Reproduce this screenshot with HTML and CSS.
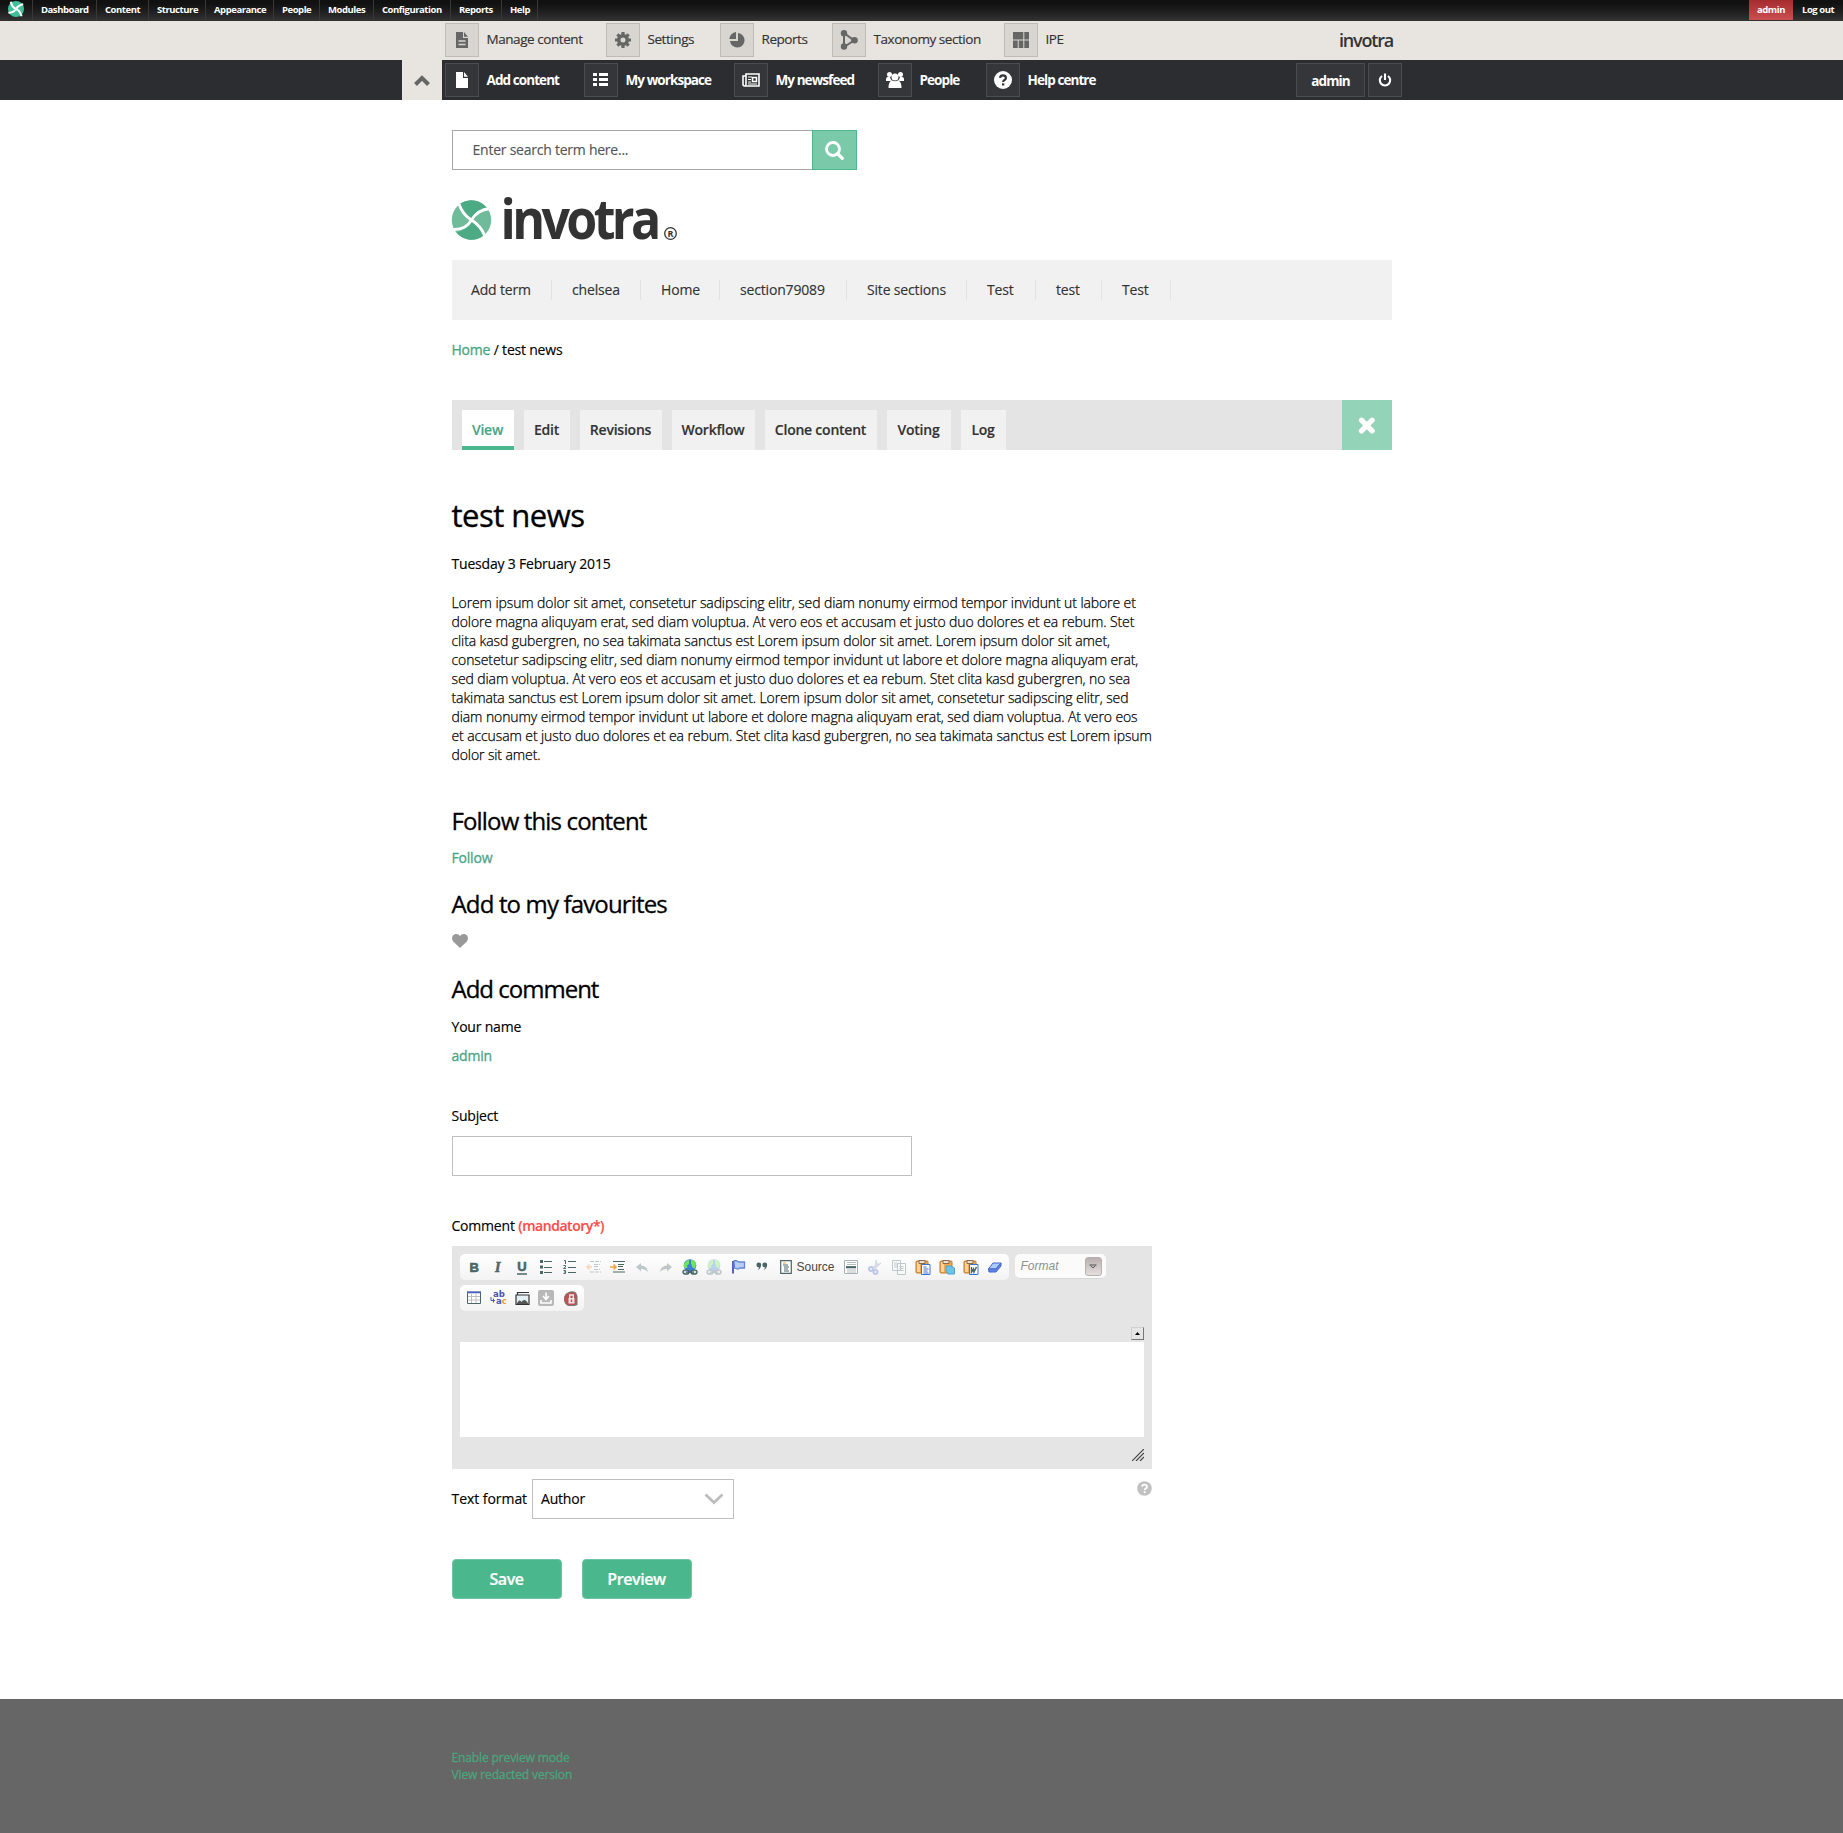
FILE: index.html
```html
<!DOCTYPE html>
<html lang="en">
<head>
<meta charset="utf-8">
<title>test news | invotra</title>
<link rel="stylesheet" href="styles.css">
</head>
<body>
<svg class="defs" width="0" height="0">
  <symbol id="globe" viewBox="0 0 16 16">
    <circle cx="8" cy="6.500" r="6.300" fill="#3f7fd8"/>
    <path d="M2 5l3-3.500 2-.5v4l-2 1.500.5 2L3 9.500 1.800 7zM9 .5l3.500 1.200L14 5l-1 4.500-2.500-1-1.500-4z" fill="#6be85a"/>
    <rect x="1" y="11.200" width="6" height="3.800" rx="1.900" fill="#d5dede" stroke="#3f5f60" stroke-width="1.300"/>
    <rect x="9" y="11.200" width="6" height="3.800" rx="1.900" fill="#d5dede" stroke="#3f5f60" stroke-width="1.300"/>
    <path d="M4 13.100h8" stroke="#3f5f60" stroke-width="1.400"/>
  </symbol>
  <symbol id="clip" viewBox="0 0 16 16">
    <rect x="1" y="2" width="12" height="12" rx="1" fill="#f0a850" stroke="#c07a2c"/>
    <path d="M2 3h3v10H2z" fill="#fbd49c"/>
    <path d="M4 1.500h6v3H4z" fill="#e9e2d8" stroke="#8d6a45"/>
  </symbol>
</svg>

<header>
  <div class="adminbar">
    <svg class="adminbar-logo" viewBox="0 0 40 40"><circle cx="20" cy="20" r="20" fill="#3fbf9a"/><path d="M7 2Q10 16 20 20T34 38M38 8Q26 10 20 20T1 29" fill="none" stroke="#fff" stroke-width="5"/></svg>
    <a class="w1">Dashboard</a><a class="w2">Content</a><a class="w3">Structure</a><a class="w4">Appearance</a><a class="w5">People</a><a class="w6">Modules</a><a class="w7">Configuration</a><a class="w8">Reports</a><a class="w9">Help</a>
    <span class="adminbar-user">admin</span><span class="adminbar-out">Log out</span>
  </div>

  <div class="bar bar-light">
    <a class="item i161"><span class="box"><svg viewBox="0 0 16 16"><path d="M2 0h7v6h5v10H2zM10 0l4 4.800h-4z" fill="#666"/><path d="M4.500 9h7M4.500 12.500h7" stroke="#d9d6d1" stroke-width="1.300"/></svg></span>Manage content</a>
    <a class="item i114"><span class="box"><svg viewBox="0 0 16 16"><circle cx="8" cy="8" r="4.300" fill="none" stroke="#666" stroke-width="3.600"/><path d="M8 0v3M8 13v3M0 8h3M13 8h3M2.400 2.400l2 2M11.600 11.600l2 2M2.400 13.600l2-2M11.600 4.400l2-2" stroke="#666" stroke-width="3.200"/></svg></span>Settings</a>
    <a class="item i112"><span class="box"><svg viewBox="0 0 16 16"><path d="M9 1a7.300 7.300 0 1 1-8 8h8zM7 0v7H.3A7.500 7.500 0 0 1 7 0z" fill="#666"/></svg></span>Reports</a>
    <a class="item i172"><span class="box box-tax"><svg viewBox="0 0 18 20"><path d="M4 3v14L14 10.500z" fill="none" stroke="#666" stroke-width="2"/><circle cx="4" cy="3.300" r="3.200" fill="#666"/><circle cx="4" cy="16.500" r="3.200" fill="#666"/><circle cx="14.500" cy="10.300" r="3.300" fill="#666"/></svg></span>Taxonomy section</a>
    <a class="item"><span class="box"><svg viewBox="0 0 16 16"><path d="M0 0h10.300v7.500H0zM11.300 0H16v7.500h-4.700zM0 8.500h4.700V16H0zM5.700 8.500h4.600V16H5.700zM11.300 8.500H16V16h-4.700z" fill="#666"/></svg></span>IPE</a>
    <svg class="brand" width="56" height="28"><text x="1" y="21" textLength="54" lengthAdjust="spacingAndGlyphs">invotra</text></svg>
  </div>

  <div class="bar bar-dark">
    <span class="collapse"><svg width="16" height="11" viewBox="0 0 16 11"><path d="M1.500 9.500L8 3l6.500 6.500" fill="none" stroke="#666" stroke-width="4"/></svg></span>
    <a class="item i139"><span class="box"><svg viewBox="0 0 16 16"><path d="M2 0h7v6h5v10H2zM10 0l4 4.800h-4z" fill="#fff"/></svg></span>Add content</a>
    <a class="item i150"><span class="box"><svg viewBox="0 0 16 16"><path d="M0 1h4v3H0zM0 6h4v3H0zM0 11h4v3H0zM6 1h9v3H6zM6 6h9v3H6zM6 11h9v3H6z" fill="#fff"/></svg></span>My workspace</a>
    <a class="item i144"><span class="box box-news"><svg viewBox="0 0 18 14"><path d="M4 1h13v12H2.500Q1 13 1 11V3h3zM4 3v8q0 2-1.500 2" fill="none" stroke="#fff" stroke-width="1.600"/><path d="M6 4h4M6 6.500h3M6 9h3M6 11h9" stroke="#fff"/><path d="M10.500 4.500h4v4h-4z" fill="none" stroke="#fff" stroke-width="1.500"/></svg></span>My newsfeed</a>
    <a class="item i108"><span class="box box-people"><svg viewBox="0 0 18 16"><g fill="#fff"><circle cx="3.500" cy="2.500" r="2.500"/><circle cx="14.500" cy="2.500" r="2.500"/><circle cx="9" cy="5" r="3.500"/><path d="M0 9V7q0-2 2-2h2q.5 3 2 3.500L4 9zM18 9V7q0-2-2-2h-2q-.5 3-2 3.500L14 9zM2.500 16q0-7 3.500-7.500 3 1.500 6 0 3.500.5 3.500 7.500z"/></g></svg></span>People</a>
    <a class="item"><span class="box box-help"><svg viewBox="0 0 18 18"><circle cx="9" cy="9" r="9" fill="#fff"/><path d="M6 6.800Q6.300 4.300 9 4.300T12 6.800Q12 8 10.500 9T9.200 11" fill="none" stroke="#35363a" stroke-width="2.200"/><path d="M8 12.300h2.300v2.200H8z" fill="#35363a"/></svg></span>Help centre</a>
    <span class="user">admin</span>
    <span class="power"><svg width="14" height="14" viewBox="0 0 14 14"><path d="M4 3a5.200 5.200 0 1 0 6 0M7 .5v6.500" fill="none" stroke="#fff" stroke-width="2.100"/></svg></span>
  </div>
</header>

<main>
  <div class="search"><span class="search-input">Enter search term here...</span><span class="search-btn"><svg width="19" height="19" viewBox="0 0 19 19"><circle cx="8" cy="8" r="6.500" fill="none" stroke="#fff" stroke-width="2.800"/><path d="M12.500 12.500l4.800 4.800" stroke="#fff" stroke-width="3.200" stroke-linecap="round"/></svg></span></div>

  <svg class="logo" width="230" height="44" viewBox="0 0 230 44">
    <circle cx="19.500" cy="20" r="19.700" fill="#6fbb9a"/>
    <path d="M8.500 3.500A19.700 19.700 0 0 1 35.500 9Q25 11 19.500 19Q12 13 8.500 3.500zM4.500 32.500A19.700 19.700 0 0 0 30.500 36.500Q27 26 19.500 20Q14 31 4.500 32.500z" fill="#4caa84"/>
    <path d="M7 4Q10 14 19.500 20T33 36M38 8.500Q25 10 19.500 20T1 29.500" fill="none" stroke="#fff" stroke-width="2.800"/>
    <text class="logo-text" x="48.500" y="39" textLength="157" lengthAdjust="spacingAndGlyphs">invotra</text>
    <circle cx="218.500" cy="33.500" r="5.800" fill="none" stroke="#333" stroke-width="1.300"/>
    <text class="logo-r" x="215.500" y="37">R</text>
  </svg>

  <nav class="sections"><a class="s100">Add term</a><a class="s89">chelsea</a><a class="s79">Home</a><a class="s127">section79089</a><a class="s120">Site sections</a><a class="s69">Test</a><a class="s66">test</a><a class="s69">Test</a></nav>

  <p class="crumb"><a>Home</a> / test news</p>

  <div class="tabs"><a class="on t52">View</a><a class="t46">Edit</a><a class="t82">Revisions</a><a class="t83">Workflow</a><a class="t112">Clone content</a><a class="t64">Voting</a><a class="t45">Log</a><span class="close"><svg width="17" height="17" viewBox="0 0 17 17"><path d="M3.500 3.200l10.600 10.600M14.100 3.200L3.500 13.800" stroke="#fff" stroke-width="5.200" stroke-linecap="round"/></svg></span></div>

  <h1>test news</h1>
  <p class="date">Tuesday 3 February 2015</p>
  <p class="body">Lorem ipsum dolor sit amet, consetetur sadipscing elitr, sed diam nonumy eirmod tempor invidunt ut labore et<br>dolore magna aliquyam erat, sed diam voluptua. At vero eos et accusam et justo duo dolores et ea rebum. Stet<br>clita kasd gubergren, no sea takimata sanctus est Lorem ipsum dolor sit amet. Lorem ipsum dolor sit amet,<br>consetetur sadipscing elitr, sed diam nonumy eirmod tempor invidunt ut labore et dolore magna aliquyam erat,<br>sed diam voluptua. At vero eos et accusam et justo duo dolores et ea rebum. Stet clita kasd gubergren, no sea<br>takimata sanctus est Lorem ipsum dolor sit amet. Lorem ipsum dolor sit amet, consetetur sadipscing elitr, sed<br>diam nonumy eirmod tempor invidunt ut labore et dolore magna aliquyam erat, sed diam voluptua. At vero eos<br>et accusam et justo duo dolores et ea rebum. Stet clita kasd gubergren, no sea takimata sanctus est Lorem ipsum<br>dolor sit amet.</p>

  <h2>Follow this content</h2>
  <p class="follow"><a>Follow</a></p>
  <h2 class="h-fav">Add to my favourites</h2>
  <svg class="heart" width="16" height="14" viewBox="0 0 16 14"><path d="M8 14L1.200 7.500C-1.500 4 .8 0 4.200 0 6 0 7.200.9 8 2.200 8.800.9 10 0 11.800 0c3.400 0 5.700 4 3 7.500z" fill="#999"/></svg>
  <h2 class="h-com">Add comment</h2>
  <p class="label">Your name</p>
  <p class="author"><a>admin</a></p>
  <p class="label">Subject</p>
  <div class="field"></div>
  <p class="label">Comment <b class="req">(mandatory*)</b></p>

  <div class="editor">
    <div class="rows">
      <div class="tb">
        <i><svg viewBox="0 0 16 16"><text class="g" x="3.500" y="12.800">B</text></svg></i>
        <i><svg viewBox="0 0 16 16"><text class="g gi" x="5" y="13">I</text></svg></i>
        <i><svg viewBox="0 0 16 16"><text class="g" x="3.300" y="12">U</text><path d="M3 15h10" stroke="#4a6667" stroke-width="1.500"/></svg></i>
        <i><svg viewBox="0 0 16 16"><path d="M2 1h3v3H2zM2 6.500h3v3H2zM2 12h3v3H2z" fill="#4a6667"/><path d="M6 2.500h8M6 8.500h8M6 13.500h8" stroke="#4a6667"/></svg></i>
        <i><svg viewBox="0 0 16 16"><path d="M2 1.500h1.500V5M1.500 6.500h2v1.500l-2 1.500h2.500M1.500 11.500h2v3h-2M2 13h1.500" fill="none" stroke="#4a6667"/><path d="M6 2.500h8M6 8.500h8M6 13.500h8" stroke="#4a6667"/></svg></i>
        <i class="off"><svg viewBox="0 0 16 16"><path d="M4 2.500h11M8 5.500h6M8 7.500h5M8 10.500h6M4 13h11" stroke="#4a6667" stroke-dasharray="4 1"/><path d="M6 8H1M3.500 5.500L1 8l2.500 2.500" fill="none" stroke="#f0902a" stroke-width="1.400"/></svg></i>
        <i><svg viewBox="0 0 16 16"><path d="M3 2.500h12M8 5.500h6M8 7.500h5M8 10.500h6M3 13h12" stroke="#4a6667" stroke-width="1.200"/><path d="M0 8h6M3.500 5.500L6 8l-2.500 2.500" fill="none" stroke="#f5a33c" stroke-width="1.600"/></svg></i>
        <i class="off"><svg viewBox="0 0 16 16"><path d="M2 8l5-4v2.500q6 0 7 6.500-3-3.500-7-3v2.500z" fill="#4a6667"/></svg></i>
        <i class="off"><svg viewBox="0 0 16 16"><path d="M14 8L9 4v2.500q-6 0-7 6.500 3-3.500 7-3v2.500z" fill="#4a6667"/></svg></i>
        <i><svg><use href="#globe"/></svg></i>
        <i class="off"><svg><use href="#globe"/></svg></i>
        <i><svg viewBox="0 0 16 16"><path d="M3 2v12.500" stroke="#5a62c0" stroke-width="2"/><path d="M4 2l2-.5 3 1.500h5.500V9H10L8 10 4.500 9z" fill="#b9cdf2" stroke="#5f86dc" stroke-width="1.300"/></svg></i>
        <i><svg viewBox="0 0 16 16"><path d="M4.800 3.500a2.400 2.400 0 0 1 2.400 2.600Q7 9.500 3.500 11.300 5 9.700 4.800 8.300a2.400 2.400 0 0 1 0-4.800zM10.800 3.500a2.400 2.400 0 0 1 2.400 2.600Q13 9.500 9.500 11.300 11 9.700 10.800 8.300a2.400 2.400 0 0 1 0-4.800z" fill="#4a6667"/></svg></i>
        <span class="src"><svg width="12" height="14" viewBox="0 0 12 14"><path d="M.7.700h10.600v12.600H.7z" fill="#fff" stroke="#4a6667" stroke-width="1.200"/><path d="M3 3h3" stroke="#f0a030"/><path d="M3 5h5M4 7h5M4 9h4M4 11h5" stroke="#4a6667"/></svg>Source</span>
        <i><svg viewBox="0 0 16 16"><path d="M1.500 1.500h13v13h-13z" fill="#fff" stroke="#a9b2b2"/><path d="M4 3.500h9M4 5.500h9M4 11h9M4 13h9" stroke="#b4bcbc"/><path d="M3 8.200h10" stroke="#4a6667" stroke-width="2.200"/></svg></i>
        <i class="off"><svg viewBox="0 0 16 16"><path d="M8 9l1-8 2 6M6 8l8-4-6 6" fill="#a0abc0" stroke="#8795b5"/><circle cx="4" cy="10" r="2" fill="none" stroke="#4a6ac8" stroke-width="2"/><circle cx="8.500" cy="13" r="2" fill="none" stroke="#4a6ac8" stroke-width="2"/></svg></i>
        <i class="off"><svg viewBox="0 0 16 16"><path d="M1.500 1.500h8v10h-8zM6.500 4.500h8v11h-8z" fill="#fff" stroke="#4a6667"/><path d="M3 4h3M3 6h3M3 8h3M8.500 7.500h4M8.500 9.500h4M8.500 11.500h4" stroke="#4a6667"/></svg></i>
        <i><svg viewBox="0 0 16 16"><use href="#clip"/><path d="M6.500 5.500h8.500v10H6.500z" fill="#fff" stroke="#3f6fd8"/><path d="M8.500 8h3M8.500 10h5M8.500 12h4M8.500 14h5" stroke="#4a6ac8"/></svg></i>
        <i><svg viewBox="0 0 16 16"><use href="#clip"/><path d="M7 7h5l3.500 2v6H9l-2-3z" fill="#6cc3e6" stroke="#4ba3cf"/></svg></i>
        <i><svg viewBox="0 0 16 16"><use href="#clip"/><path d="M6.500 5.500h8.500v10H6.500z" fill="#fff" stroke="#3f6fd8"/><path d="M8.500 8v5l2-3 .5 3 2.500-5" fill="none" stroke="#4a6667" stroke-width="1.500"/></svg></i>
        <i><svg viewBox="0 0 16 16"><path d="M6 4h8l-5 6H1.500z" fill="#a9cdfa" stroke="#4a62c8"/><path d="M1.500 10H9l5-6v3l-5 6H2z" fill="#5a8ae6" stroke="#4a62c8"/></svg></i>
      </div>
      <div class="combo"><span>Format</span><em><svg width="8" height="5" viewBox="0 0 8 5"><path d="M.5 1h7M1.500 1.500L4 4l2.500-2.500" fill="none" stroke="#555"/></svg></em></div>
    </div>
    <div class="tb tb2">
      <i><svg viewBox="0 0 16 16"><path d="M1.500 2.500h13v11h-13z" fill="#fff" stroke="#4a6667"/><path d="M1 2.300h14" stroke="#4a62b8" stroke-width="2"/><path d="M2 6.500h12M2 10h12M5.500 4v9M10 4v9" stroke="#bdbdbd"/></svg></i>
      <i><svg viewBox="0 0 16 16"><text class="rp" x="3" y="7">ab</text><text class="rp" x="6" y="14">a<tspan fill="#f0a030">c</tspan></text><path d="M1 7v3.500h4M3.500 8.500v4" fill="none" stroke="#4a55b8"/></svg></i>
      <i><svg viewBox="0 0 16 16"><path d="M3.500 5V2.500H15M2 14.500V5h13v9.500z" fill="#e2f0f6" stroke="#333" stroke-width="1.200"/><path d="M2.500 14q3-6 5-2 3-5 7 2z" fill="#555"/></svg></i>
      <i><svg viewBox="0 0 16 16"><rect width="16" height="16" rx="2" fill="#b8b8b8"/><path d="M8 2.500v6M5 6l3 3.500L11 6M3 10v3h10v-3" fill="none" stroke="#fff" stroke-width="1.600"/></svg></i>
      <i><svg viewBox="0 0 16 16"><path d="M2 9Q2 4 6 2.500 10 0 14 2.500L15.500 6v9l-3 1H6Q2 14 2 9z" fill="#777"/><path d="M2 9Q2.500 3.500 8.500 2.500h4l2 3V14l-2 1H6.500Q2.500 13 2 9z" fill="#b85552"/><path d="M6.500 8h6v5.500h-6z" fill="#f3e4e4"/><path d="M7.700 8V5h3.600v3" fill="none" stroke="#f3e4e4" stroke-width="1.400"/><path d="M9.500 9.500v2.500" stroke="#b85552" stroke-width="1.500"/></svg></i>
    </div>
    <span class="fold"><svg width="5" height="3" viewBox="0 0 5 3"><path d="M0 3L2.500 0 5 3z" fill="#000"/></svg></span>
    <div class="canvas"></div>
    <svg class="grip" width="12" height="12" viewBox="0 0 12 12"><path d="M0 12L12 0M4 12l8-8M8 12l4-4" stroke="#444" stroke-width="1.200"/></svg>
  </div>

  <div class="format"><span class="format-label">Text format</span><span class="select">Author<svg width="20" height="12" viewBox="0 0 20 12"><path d="M1.500 1.500L10 9.500l8.500-8" fill="none" stroke="#bdbdbd" stroke-width="2.800"/></svg></span>
    <svg class="tip" width="15" height="15" viewBox="0 0 18 18"><circle cx="9" cy="9" r="8.700" fill="#c0c0c0"/><path d="M6 6.800Q6.300 4.300 9 4.300T12 6.800Q12 8 10.500 9T9.200 11" fill="none" stroke="#fff" stroke-width="2.200"/><path d="M8 12.300h2.300v2.200H8z" fill="#fff"/></svg>
  </div>
  <div class="actions"><button>Save</button><button>Preview</button></div>
</main>

<footer><a>Enable preview mode</a><a>View redacted version</a></footer>
</body>
</html>
```

FILE: styles.css
```css
* { box-sizing: border-box; }
body { margin: 0; background: #fff; color: #000; font: 13.5px/20px "Open Sans", "Noto Sans", sans-serif; letter-spacing: -0.44px; }
p, h1, h2 { margin: 0; white-space: nowrap; }
a { color: inherit; text-decoration: none; }
i { font-style: normal; }
svg { flex: none; }
.defs { position: absolute; }

.adminbar { display: flex; height: 21px; padding-left: 8px; background: linear-gradient(#111 15%, #1b1b1b 45%, #333); color: #fff; font-size: 9.5px; font-weight: 700; line-height: 19px; letter-spacing: -0.45px; white-space: nowrap; }
.adminbar-logo { width: 16px; height: 16px; margin: 1px 8px 0 0; }
.adminbar a { flex: none; padding-left: 8px; border-left: 1px solid #383838; }
.w1 { width: 64px; }
.w2 { width: 52px; }
.w3 { width: 57px; }
.w4 { width: 68px; }
.w5 { width: 46px; }
.w6 { width: 54px; }
.w7 { width: 77px; }
.w8 { width: 51px; }
.adminbar .w9 { width: 37px; border-right: 1px solid #383838; }
.adminbar-user { width: 44px; height: 20px; margin-left: auto; background: linear-gradient(#a52b2e, #c94f51); text-align: center; }
.adminbar-out { width: 50px; padding-left: 9px; }

.bar { display: flex; padding-right: 441px; white-space: nowrap; }
.bar-light { height: 39px; padding: 2px 449px 0 445px; background: #e8e5e0; color: #333; -webkit-text-stroke: 0.15px; }
.bar-dark { height: 40px; padding-left: 402px; background: #2c2d31; color: #fff; font-weight: 700; letter-spacing: -0.92px; }
.item { display: flex; flex: none; gap: 7.5px; line-height: 33px; }
.bar-dark .item { padding-top: 3px; line-height: 35px; }
.box { display: flex; flex: none; align-items: center; justify-content: center; width: 34px; height: 34px; border: 1px solid #bfbcb8; background: #d9d6d1; }
.box svg { width: 16px; height: 16px; }
.box-tax svg { width: 18px; height: 20px; }
.box-news svg { width: 18px; height: 14px; }
.box-people svg { width: 18px; height: 16px; }
.box-help svg { width: 18px; height: 18px; }
.bar-dark .box, .user, .power { border: 1px solid #4b4c4f; background: #35363a; }
.i161 { width: 161px; }
.i114 { width: 114px; }
.i112 { width: 112px; }
.i172 { width: 172px; }
.i139 { width: 139px; }
.i150 { width: 150px; }
.i144 { width: 144px; }
.i108 { width: 108px; }
.brand { margin: 3px 0 0 auto; overflow: visible; }
.brand text { font: 600 18px "Open Sans", sans-serif; letter-spacing: -1.2px; fill: #333; }
.collapse { display: flex; flex: none; align-items: center; justify-content: center; width: 40px; margin-right: 3px; background: #e8e5e0; }
.user { width: 69px; height: 34px; margin: 3px 3px 0 auto; line-height: 35px; text-align: center; }
.power { display: flex; align-items: center; justify-content: center; width: 34px; height: 34px; margin-top: 3px; }

main { width: 940px; height: 1599px; margin-left: 451.5px; padding-top: 30px; font-size: 14px; letter-spacing: -0.2px; -webkit-text-stroke: 0.15px; }
.search { display: flex; height: 40px; }
.search-input { width: 360px; padding-left: 20px; border: 1px solid #a6a6a6; border-right: 0; color: #555; line-height: 38px; letter-spacing: -0.24px; }
.search-btn { display: flex; align-items: center; justify-content: center; width: 45px; border: 1px solid #4bb78c; background: #7acaaa; }
.logo { display: block; margin-top: 30px; overflow: visible; }
.logo-text { font: 700 55px "Open Sans", sans-serif; letter-spacing: -4px; fill: #333; }
.logo-r { font: 700 9px "Open Sans", sans-serif; letter-spacing: 0; fill: #333; }

.sections { display: flex; height: 60px; margin-top: 16px; padding-top: 20px; background: #f1f1f1; color: #333; }
.sections a { padding-left: 20.5px; border-right: 1px solid #e2e2e2; height: 20px; letter-spacing: -0.17px; }
.sections .s100 { padding-left: 19.5px; }
.s100 { width: 100px; }
.s89 { width: 89px; }
.s79 { width: 79px; }
.s127 { width: 127px; }
.s120 { width: 120px; }
.s69 { width: 69px; }
.s66 { width: 66px; }
.crumb { margin-top: 20px; }
.crumb a, .follow a, .author a { color: #4aa583; -webkit-text-stroke: 0.3px; }

.tabs { display: flex; gap: 10px; height: 50px; margin-top: 40px; padding-left: 10px; background: #e4e4e4; color: #333; font-weight: 600; letter-spacing: -0.23px; }
.tabs a { height: 40px; margin-top: 10px; background: #f1f1f1; line-height: 40px; text-align: center; }
.tabs .on { background: #fff; border-bottom: 4px solid #4bb78c; color: #4aa583; }
.t52 { width: 52px; }
.t46 { width: 46px; }
.t82 { width: 82px; }
.t83 { width: 83px; }
.t112 { width: 112px; }
.t64 { width: 64px; }
.t45 { width: 45px; }
.close { display: flex; align-items: center; justify-content: center; width: 50px; margin-left: auto; background: #93d4b9; }

h1 { margin-top: 45px; font-size: 31px; font-weight: 400; line-height: 40px; letter-spacing: -0.5px; -webkit-text-stroke: 0.35px; }
.date { margin-top: 19px; }
.body { margin-top: 19px; line-height: 19px; font-weight: 300; letter-spacing: -0.102px; -webkit-text-stroke: 0.25px; }
h2 { margin-top: 42px; font-size: 24px; font-weight: 400; line-height: 30px; letter-spacing: -0.85px; -webkit-text-stroke: 0.3px; }
.follow { margin-top: 12px; }
.h-fav { margin-top: 21px; }
.heart { display: block; margin-top: 15px; }
.h-com { margin-top: 26px; margin-bottom: 13px; letter-spacing: -1px; }
.author { margin: 9px 0 40px; }
.field { width: 460px; height: 40px; margin: 10px 0 40px; border: 1px solid #bfbfbf; }
.req { color: #ff4b4b; font-weight: 600; letter-spacing: -0.45px; }

.editor { display: flow-root; width: 700px; height: 223px; margin-top: 10px; padding: 8px; background: #e5e5e5; -webkit-text-stroke: 0; }
.rows { display: flex; gap: 6px; }
.tb { display: flex; align-items: center; width: 549px; height: 26px; padding: 0 2px; border-radius: 5px; background: linear-gradient(#fff, #f3f3f3); }
.tb i { display: flex; flex: none; justify-content: center; width: 24px; height: 16px; }
.tb i svg { width: 16px; height: 16px; }
.tb .off { opacity: 0.33; }
.g { font: 700 13px "Liberation Sans", sans-serif; letter-spacing: 0; fill: #4a6667; stroke: #4a6667; stroke-width: 0.6px; }
.gi { font: italic 700 14px "Liberation Serif", serif; }
.rp { font: 700 8.500px "DejaVu Sans", sans-serif; letter-spacing: 0; fill: #4a55b8; }
.src { display: flex; align-items: center; gap: 5px; width: 65px; padding-left: 6px; color: #474747; font: 12px "Liberation Sans", Arial, sans-serif; letter-spacing: 0; }
.combo { display: flex; justify-content: space-between; width: 91px; height: 25px; padding: 3px 4px 2px 6px; border-radius: 5px; background: #fbfbfb; border-bottom: 1px solid #d8d8d8; color: #8f8f8f; font: italic 12px/18px "Liberation Sans", Arial, sans-serif; letter-spacing: 0; }
.combo em { display: flex; align-items: center; justify-content: center; width: 17px; height: 19px; border-radius: 3px; border: 1px solid #b8b0b0; background: linear-gradient(#b9afaf, #e6dfdf); }
.tb2 { width: 124px; margin-top: 5px; }
.fold { display: flex; align-items: center; justify-content: center; width: 13px; height: 13px; margin: 16px 0 2px auto; border: 1px solid; border-color: #d0d0d0 #777 #777 #d0d0d0; }
.canvas { height: 95px; background: #fff; }
.grip { display: block; margin: 12px 0 0 auto; }

.format { display: flex; height: 40px; margin-top: 10px; }
.format-label { width: 80px; line-height: 40px; letter-spacing: -0.05px; }
.select { display: flex; align-items: center; justify-content: space-between; width: 202px; padding: 0 8.5px; border: 1px solid #bfbfbf; }
.tip { margin: 2px 0 0 403px; }
.actions { display: flex; gap: 20px; margin-top: 40px; }
button { width: 110px; height: 40px; padding: 0; border: 1px solid #6fc5a3; border-radius: 4px; background: #4bb78c; color: #fff; font: 600 16px "Open Sans", sans-serif; letter-spacing: -0.4px; -webkit-text-stroke: 0.2px; }

footer { display: flex; flex-direction: column; height: 134px; padding: 50px 0 0 451.5px; background: #666; color: #4aa57c; font-size: 12px; line-height: 17px; letter-spacing: -0.12px; -webkit-text-stroke: 0.3px; }
```
